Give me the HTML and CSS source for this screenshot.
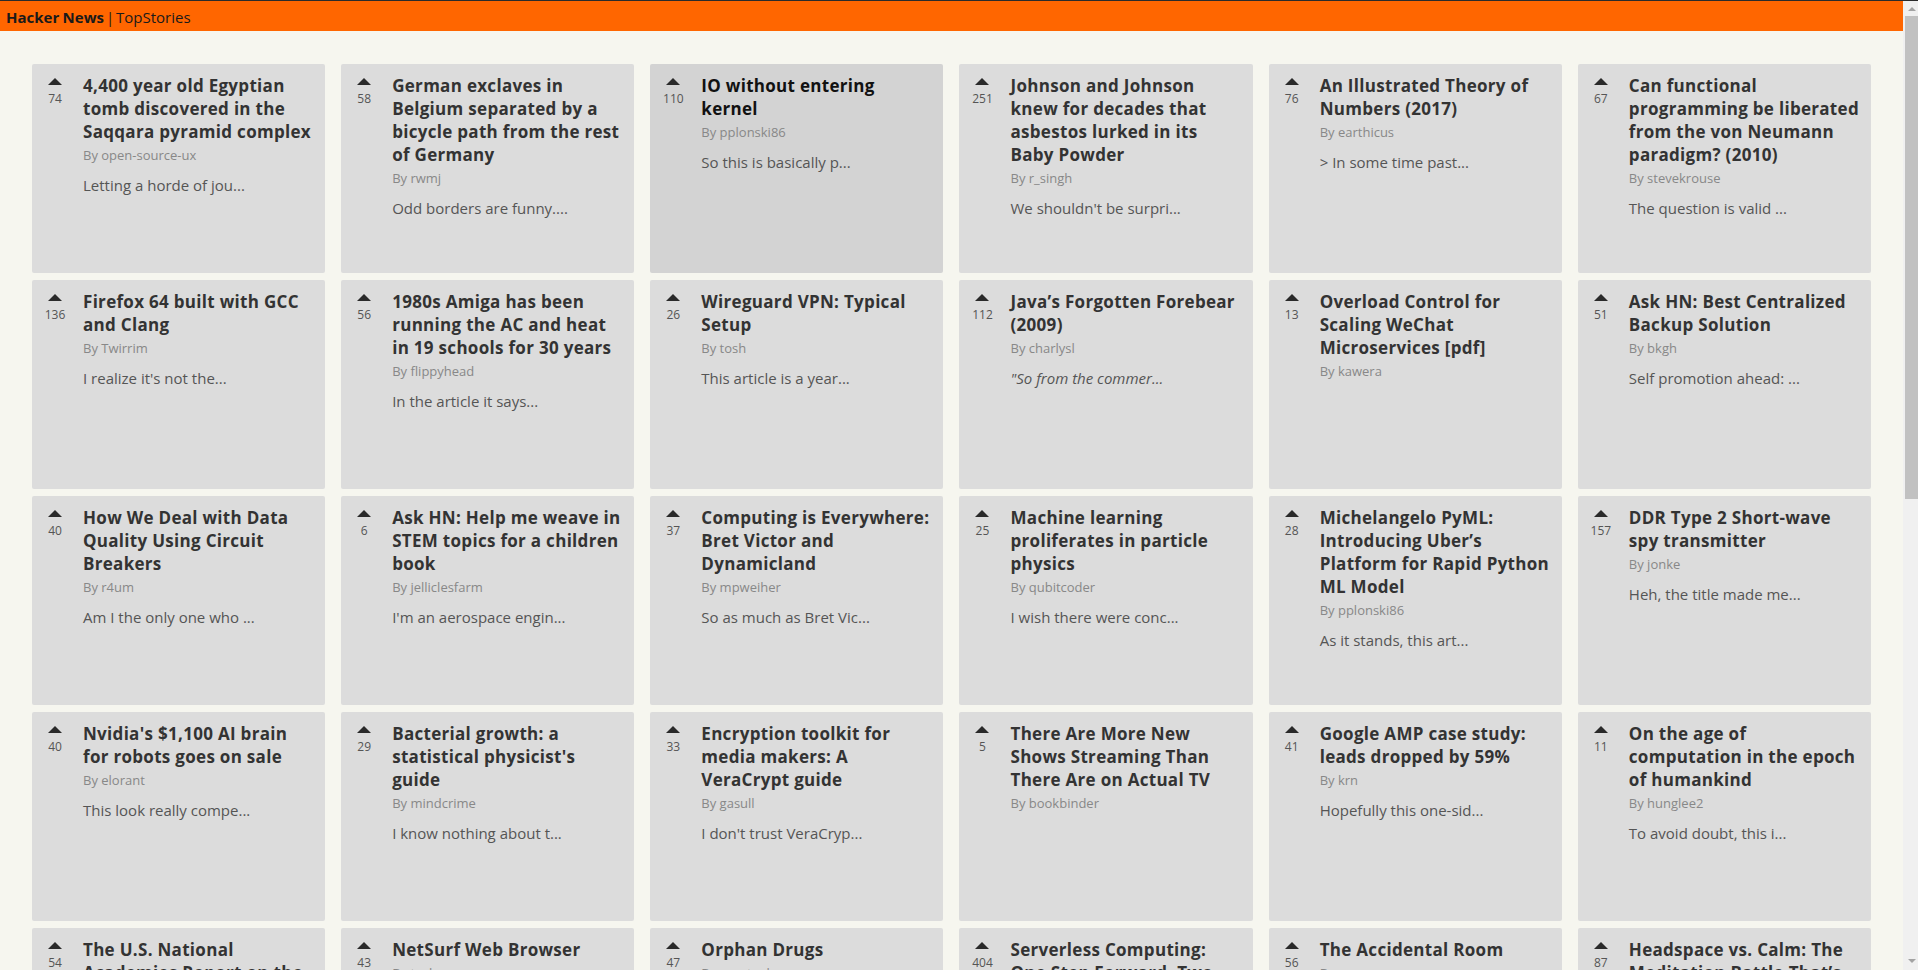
FILE: index.html
```html
<!DOCTYPE html>
<html lang="en">
<head>
<meta charset="utf-8">
<title>Hacker News | TopStories</title>
<link rel="stylesheet" href="styles.css">
</head>
<body>
<header class="topbar"><span class="brand">Hacker News</span> | TopStories</header>
<main class="grid">
  <article class="card"><div class="vote"><span class="arrow"></span><span class="score">74</span></div><div class="body"><h3 class="title">4,400 year old Egyptian tomb discovered in the Saqqara pyramid complex</h3><div class="by">By open-source-ux</div><p class="text">Letting a horde of jou...</p></div></article>
  <article class="card"><div class="vote"><span class="arrow"></span><span class="score">58</span></div><div class="body"><h3 class="title">German exclaves in Belgium separated by a bicycle path from the rest of Germany</h3><div class="by">By rwmj</div><p class="text">Odd borders are funny....</p></div></article>
  <article class="card hover"><div class="vote"><span class="arrow"></span><span class="score">110</span></div><div class="body"><h3 class="title">IO without entering kernel</h3><div class="by">By pplonski86</div><p class="text">So this is basically p...</p></div></article>
  <article class="card"><div class="vote"><span class="arrow"></span><span class="score">251</span></div><div class="body"><h3 class="title">Johnson and Johnson knew for decades that asbestos lurked in its Baby Powder</h3><div class="by">By r_singh</div><p class="text">We shouldn't be surpri...</p></div></article>
  <article class="card"><div class="vote"><span class="arrow"></span><span class="score">76</span></div><div class="body"><h3 class="title">An Illustrated Theory of Numbers (2017)</h3><div class="by">By earthicus</div><p class="text">&gt; In some time past...</p></div></article>
  <article class="card"><div class="vote"><span class="arrow"></span><span class="score">67</span></div><div class="body"><h3 class="title">Can functional programming be liberated from the von Neumann paradigm? (2010)</h3><div class="by">By stevekrouse</div><p class="text">The question is valid ...</p></div></article>

  <article class="card"><div class="vote"><span class="arrow"></span><span class="score">136</span></div><div class="body"><h3 class="title">Firefox 64 built with GCC and Clang</h3><div class="by">By Twirrim</div><p class="text">I realize it's not the...</p></div></article>
  <article class="card"><div class="vote"><span class="arrow"></span><span class="score">56</span></div><div class="body"><h3 class="title">1980s Amiga has been running the AC and heat in 19 schools for 30 years</h3><div class="by">By flippyhead</div><p class="text">In the article it says...</p></div></article>
  <article class="card"><div class="vote"><span class="arrow"></span><span class="score">26</span></div><div class="body"><h3 class="title">Wireguard VPN: Typical Setup</h3><div class="by">By tosh</div><p class="text">This article is a year...</p></div></article>
  <article class="card"><div class="vote"><span class="arrow"></span><span class="score">112</span></div><div class="body"><h3 class="title">Java’s Forgotten Forebear (2009)</h3><div class="by">By charlysl</div><p class="text"><i>"So from the commer...</i></p></div></article>
  <article class="card"><div class="vote"><span class="arrow"></span><span class="score">13</span></div><div class="body"><h3 class="title">Overload Control for Scaling WeChat Microservices [pdf]</h3><div class="by">By kawera</div></div></article>
  <article class="card"><div class="vote"><span class="arrow"></span><span class="score">51</span></div><div class="body"><h3 class="title">Ask HN: Best Centralized Backup Solution</h3><div class="by">By bkgh</div><p class="text">Self promotion ahead: ...</p></div></article>

  <article class="card"><div class="vote"><span class="arrow"></span><span class="score">40</span></div><div class="body"><h3 class="title">How We Deal with Data Quality Using Circuit Breakers</h3><div class="by">By r4um</div><p class="text">Am I the only one who ...</p></div></article>
  <article class="card"><div class="vote"><span class="arrow"></span><span class="score">6</span></div><div class="body"><h3 class="title">Ask HN: Help me weave in STEM topics for a children book</h3><div class="by">By jelliclesfarm</div><p class="text">I'm an aerospace engin...</p></div></article>
  <article class="card"><div class="vote"><span class="arrow"></span><span class="score">37</span></div><div class="body"><h3 class="title">Computing is Everywhere: Bret Victor and Dynamicland</h3><div class="by">By mpweiher</div><p class="text">So as much as Bret Vic...</p></div></article>
  <article class="card"><div class="vote"><span class="arrow"></span><span class="score">25</span></div><div class="body"><h3 class="title">Machine learning proliferates in particle physics</h3><div class="by">By qubitcoder</div><p class="text">I wish there were conc...</p></div></article>
  <article class="card"><div class="vote"><span class="arrow"></span><span class="score">28</span></div><div class="body"><h3 class="title">Michelangelo PyML: Introducing Uber’s Platform for Rapid Python ML Model</h3><div class="by">By pplonski86</div><p class="text">As it stands, this art...</p></div></article>
  <article class="card"><div class="vote"><span class="arrow"></span><span class="score">157</span></div><div class="body"><h3 class="title">DDR Type 2 Short-wave spy transmitter</h3><div class="by">By jonke</div><p class="text">Heh, the title made me...</p></div></article>

  <article class="card"><div class="vote"><span class="arrow"></span><span class="score">40</span></div><div class="body"><h3 class="title">Nvidia's $1,100 AI brain for robots goes on sale</h3><div class="by">By elorant</div><p class="text">This look really compe...</p></div></article>
  <article class="card"><div class="vote"><span class="arrow"></span><span class="score">29</span></div><div class="body"><h3 class="title">Bacterial growth: a statistical physicist's guide</h3><div class="by">By mindcrime</div><p class="text">I know nothing about t...</p></div></article>
  <article class="card"><div class="vote"><span class="arrow"></span><span class="score">33</span></div><div class="body"><h3 class="title">Encryption toolkit for media makers: A VeraCrypt guide</h3><div class="by">By gasull</div><p class="text">I don't trust VeraCryp...</p></div></article>
  <article class="card"><div class="vote"><span class="arrow"></span><span class="score">5</span></div><div class="body"><h3 class="title">There Are More New Shows Streaming Than There Are on Actual TV</h3><div class="by">By bookbinder</div></div></article>
  <article class="card"><div class="vote"><span class="arrow"></span><span class="score">41</span></div><div class="body"><h3 class="title">Google AMP case study: leads dropped by 59%</h3><div class="by">By krn</div><p class="text">Hopefully this one-sid...</p></div></article>
  <article class="card"><div class="vote"><span class="arrow"></span><span class="score">11</span></div><div class="body"><h3 class="title">On the age of computation in the epoch of humankind</h3><div class="by">By hunglee2</div><p class="text">To avoid doubt, this i...</p></div></article>

  <article class="card"><div class="vote"><span class="arrow"></span><span class="score">54</span></div><div class="body"><h3 class="title">The U.S. National Academies Report on the Prospects for Quantum Computing</h3><div class="by">By lainon</div><p class="text">This is a great report...</p></div></article>
  <article class="card"><div class="vote"><span class="arrow"></span><span class="score">43</span></div><div class="body"><h3 class="title">NetSurf Web Browser</h3><div class="by">By tosh</div><p class="text">I've used NetSurf on ...</p></div></article>
  <article class="card"><div class="vote"><span class="arrow"></span><span class="score">47</span></div><div class="body"><h3 class="title">Orphan Drugs</h3><div class="by">By prostoalex</div><p class="text">The article is about ...</p></div></article>
  <article class="card"><div class="vote"><span class="arrow"></span><span class="score">404</span></div><div class="body"><h3 class="title">Serverless Computing: One Step Forward, Two Steps Back</h3><div class="by">By hhs</div><p class="text">I think the main issu...</p></div></article>
  <article class="card"><div class="vote"><span class="arrow"></span><span class="score">56</span></div><div class="body"><h3 class="title">The Accidental Room</h3><div class="by">By sonnyp</div><p class="text">Reminds me of the ol...</p></div></article>
  <article class="card"><div class="vote"><span class="arrow"></span><span class="score">87</span></div><div class="body"><h3 class="title">Headspace vs. Calm: The Meditation Battle That’s Gripping Silicon Valley</h3><div class="by">By pseudolus</div><p class="text">I tried both of these...</p></div></article>

  <article class="card"><div class="vote"><span class="arrow"></span><span class="score">212</span></div><div class="body"><h3 class="title">Show HN: A static site generator written in Rust</h3><div class="by">By lachlan</div><p class="text">Nice work, how does ...</p></div></article>
  <article class="card"><div class="vote"><span class="arrow"></span><span class="score">98</span></div><div class="body"><h3 class="title">The Rise of the Thought Leader</h3><div class="by">By jseliger</div><p class="text">There's an interesti...</p></div></article>
  <article class="card"><div class="vote"><span class="arrow"></span><span class="score">31</span></div><div class="body"><h3 class="title">A Guide to Undefined Behavior in C and C++ (2010)</h3><div class="by">By Tomte</div><p class="text">Every time this come...</p></div></article>
  <article class="card"><div class="vote"><span class="arrow"></span><span class="score">64</span></div><div class="body"><h3 class="title">Designing Windows 95’s User Interface</h3><div class="by">By sohkamyung</div><p class="text">I still miss the cla...</p></div></article>
  <article class="card"><div class="vote"><span class="arrow"></span><span class="score">19</span></div><div class="body"><h3 class="title">Why Do Computers Use So Much Energy?</h3><div class="by">By dnetesn</div><p class="text">Landauer's principle...</p></div></article>
  <article class="card"><div class="vote"><span class="arrow"></span><span class="score">145</span></div><div class="body"><h3 class="title">Kubernetes Failure Stories</h3><div class="by">By hjacobs</div><p class="text">This is a great list...</p></div></article>
</main>
<div class="scrollbar" aria-hidden="true"><span class="sb-up"></span><span class="sb-thumb"></span><span class="sb-down"></span></div>
</body>
</html>
```

FILE: styles.css
```css
html {
  background: #f6f6ef;
}

body {
  margin: 0 15px 0 0;
  border-top: 1px solid #2b2b2b;
  background: #f6f6ef;
  font-family: "Open Sans", "Noto Sans", "Liberation Sans", sans-serif;
  color: #222;
}

.topbar {
  background: #ff6600;
  height: 27px;
  padding: 3px 6px 0;
  font-size: 15px;
  line-height: 27px;
  word-spacing: -2px;
  color: #1a1a1a;
}

.brand {
  font-weight: 700;
  word-spacing: -0.5px;
}

.grid {
  display: grid;
  grid-template-columns: repeat(6, 1fr);
  grid-auto-rows: 209px;
  column-gap: 16px;
  row-gap: 7px;
  padding: 33px 32px 100px;
}

.card {
  display: flex;
  background: #dcdcdc;
  border-radius: 2px;
  padding: 10px 10px 10px 10px;
  min-width: 0;
  overflow: hidden;
}

.card.hover {
  background: #d3d3d3;
}

.card.hover .title {
  color: #111;
}

.vote {
  flex: none;
  width: 26px;
  display: flex;
  flex-direction: column;
  align-items: center;
  padding-top: 4px;
}

.arrow {
  width: 0;
  height: 0;
  border-left: 7px solid transparent;
  border-right: 7px solid transparent;
  border-bottom: 7px solid #2a2a2a;
}

.score {
  margin-top: 6px;
  font-size: 12px;
  line-height: 16px;
  color: #555;
}

.body {
  flex: 1;
  min-width: 0;
  margin-left: 15px;
}

.title {
  margin: 0;
  font-size: 17px;
  line-height: 23px;
  font-weight: 700;
  letter-spacing: 0.3px;
  color: #333;
}

.by {
  margin-top: 3px;
  font-size: 13px;
  line-height: 18px;
  color: #888;
}

.text {
  margin: 11px 0 0;
  font-size: 15px;
  line-height: 20px;
  color: #555;
}

/* window scrollbar, drawn over the right edge */
.scrollbar {
  position: fixed;
  top: 0;
  right: 0;
  width: 15px;
  height: 100vh;
  box-sizing: border-box;
  border-top: 1px solid #2b2b2b;
  background: #f0f0f0;
}

.sb-up,
.sb-down {
  position: absolute;
  left: 5px;
  width: 0;
  height: 0;
  border-left: 4px solid transparent;
  border-right: 4px solid transparent;
}

.sb-up {
  top: 6px;
  border-bottom: 4px solid #a3a3a3;
}

.sb-down {
  bottom: 7px;
  border-top: 4px solid #a3a3a3;
}

.sb-thumb {
  position: absolute;
  top: 15px;
  left: 2px;
  right: 0;
  height: 483px;
  background: #c1c1c1;
}
```
